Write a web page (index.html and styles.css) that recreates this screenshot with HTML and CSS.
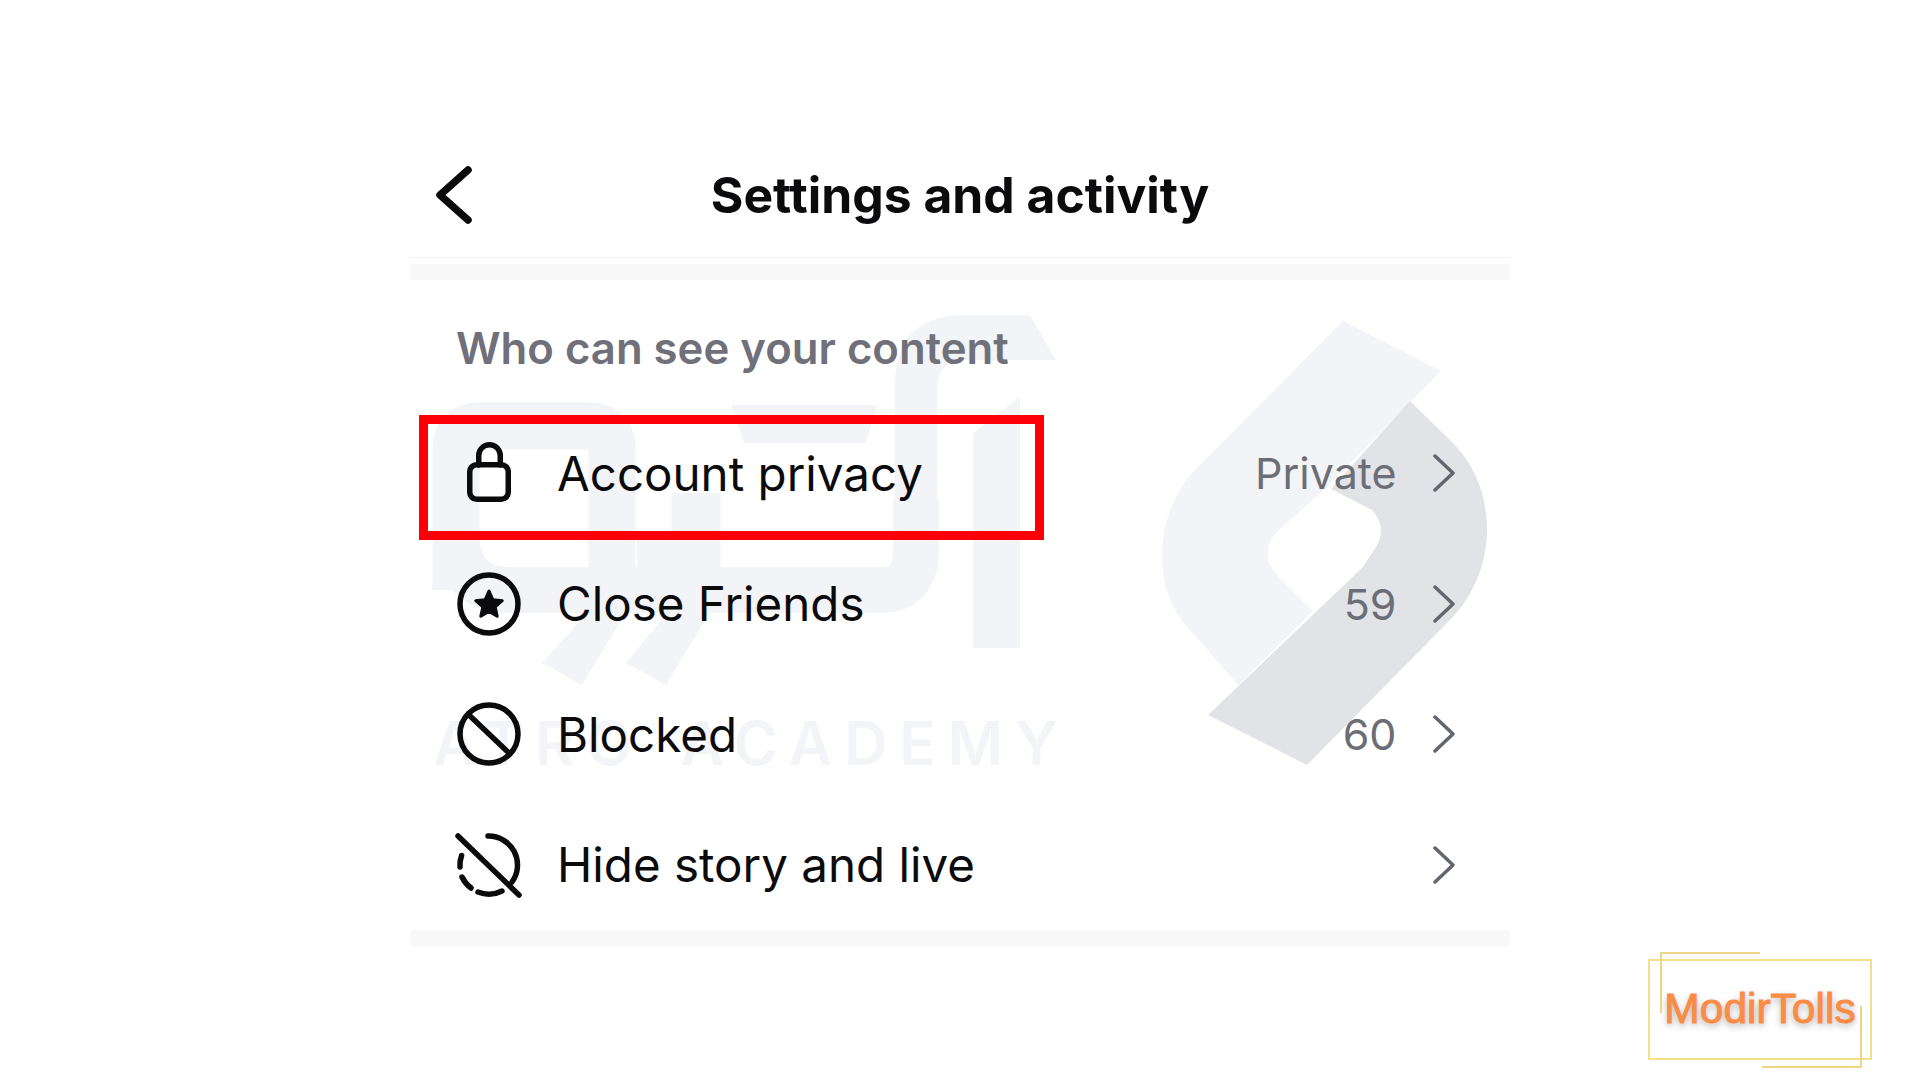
FILE: index.html
```html
<!DOCTYPE html>
<html lang="en">
<head>
    <meta charset="UTF-8">
    <meta name="viewport" content="width=device-width, initial-scale=1.0">
    <title>Settings and activity</title>
    <link rel="stylesheet" href="styles.css">
</head>
<body>
    <!-- faded academy watermark behind the list -->
    <svg class="watermark" viewBox="0 0 1920 1080" aria-hidden="true">
        <g fill="none" stroke="#f3f4f7">
            <path stroke-width="47" d="M456 590 V450 Q456 426 480 426 H590 Q612 426 612 450 V590"/>
            <path stroke-width="46" d="M456 530 Q456 590 510 590 H880 Q916 590 916 550 V500"/>
            <path stroke-width="49" d="M696 493 V590"/>
        </g>
        <g fill="#f3f4f7">
            <rect x="637" y="540" width="35" height="30"/>
            <polygon points="731,405 877,405 866,443 744,443"/>
            <path d="M895 560 V385 Q895 315 965 315 H1030 L1056 360 H965 Q937 360 937 390 V560 Z"/>
            <polygon points="973,433 1020,397 1020,648 973,648"/>
            <polygon points="588,612 542,663 582,685 626,612"/>
            <polygon points="668,612 626,663 666,685 710,612"/>
            <path d="M1343 321 L1441 371 L1327 487 L1277 532 Q1258 553 1277 575 L1313 611 L1238 685 L1190 630 Q1162 600 1162 557 Q1162 510 1190 475 Z"/>
        </g>
        <path fill="#e2e3e7" d="M1410 401 L1455 445 C1478 470 1487 500 1487 530 C1487 565 1472 598 1450 620 L1307 765 L1208 715 L1363 567 L1372 553 Q1390 530 1372 510 L1331 489 Z"/>
    </svg>
    <div class="watermark-name">ATRO ACADEMY</div>

    <div class="screen">
        <header class="top-bar">
            <svg class="back" viewBox="0 0 40 60" aria-hidden="true">
                <path d="M33 5 L5 30 L33 55"/>
            </svg>
            <h1>Settings and activity</h1>
        </header>
        <div class="band"></div>

        <h2 class="section-label">Who can see your content</h2>
        <ul class="list">
            <li class="row marked">
                <svg class="icon" viewBox="0 0 64 64" aria-hidden="true">
                    <rect x="12.75" y="23.75" width="38.5" height="34.5" rx="7"/>
                    <path d="M21.75 24 V14.5 a10.75 10.75 0 0 1 21.5 0 V24"/>
                </svg>
                <span class="row-name">Account privacy</span>
                <span class="row-value">Private</span>
                <svg class="more" viewBox="0 0 24 38" aria-hidden="true"><path d="M3 2 L21 19 L3 36"/></svg>
            </li>
            <li class="row">
                <svg class="icon" viewBox="0 0 64 64" aria-hidden="true">
                    <circle cx="32" cy="32" r="29"/>
                    <path class="solid" d="M32 19 L35.8 27.7 L45.3 28.7 L38.2 35 L40.2 44.3 L32 39.5 L23.8 44.3 L25.8 35 L18.7 28.7 L28.2 27.7 Z"/>
                </svg>
                <span class="row-name">Close Friends</span>
                <span class="row-value">59</span>
                <svg class="more" viewBox="0 0 24 38" aria-hidden="true"><path d="M3 2 L21 19 L3 36"/></svg>
            </li>
            <li class="row">
                <svg class="icon" viewBox="0 0 64 64" aria-hidden="true">
                    <circle cx="32" cy="32" r="29"/>
                    <path d="M12 13 L52 51"/>
                </svg>
                <span class="row-name">Blocked</span>
                <span class="row-value">60</span>
                <svg class="more" viewBox="0 0 24 38" aria-hidden="true"><path d="M3 2 L21 19 L3 36"/></svg>
            </li>
            <li class="row">
                <svg class="icon" viewBox="0 0 64 64" aria-hidden="true">
                    <path d="M31 3 A29 29 0 0 1 55 49"/>
                    <path d="M4.6 22.5 A29 29 0 0 0 3 34"/>
                    <path d="M5 44 A29 29 0 0 0 14 55"/>
                    <path d="M21 59 A29 29 0 0 0 45 58"/>
                    <path d="M1 3 L62 62"/>
                </svg>
                <span class="row-name">Hide story and live</span>
                <svg class="more" viewBox="0 0 24 38" aria-hidden="true"><path d="M3 2 L21 19 L3 36"/></svg>
            </li>
        </ul>
        <div class="band band-end"></div>
    </div>

    <div class="badge">ModirTolls</div>
</body>
</html>
```

FILE: styles.css
```css
*, *::before, *::after {
    box-sizing: border-box;
}
html, body {
    height: 100%;
}
body {
    margin: 0;
    background-color: #fff;
    color: #0b0b0d;
    font-family: Inter, "Liberation Sans", sans-serif;
    overflow: hidden;
}
.watermark {
    position: absolute;
    left: 0;
    top: 0;
    width: 1920px;
    height: 1080px;
}
.watermark-name {
    position: absolute;
    left: 433px;
    top: 707px;
    font-size: 60px;
    line-height: 73px;
    font-weight: 600;
    letter-spacing: 12px;
    word-spacing: 9px;
    white-space: nowrap;
    color: #f3f4f7;
}
.screen {
    position: relative;
    width: 1100px;
    margin: 0 auto;
    padding-top: 133px;
}
.top-bar {
    position: relative;
    display: flex;
    justify-content: center;
    align-items: center;
    height: 125px;
    padding-bottom: 1px;
    border-bottom: 1px solid #f3f3f3;
}
.top-bar h1 {
    margin: 0;
    font-size: 49.8px;
    font-weight: 700;
}
.back {
    position: absolute;
    left: 25px;
    top: 32px;
    width: 40px;
    height: 60px;
    fill: none;
    stroke: #0b0b0d;
    stroke-width: 7.5;
    stroke-linecap: round;
    stroke-linejoin: round;
}
.band {
    height: 16px;
    margin-top: 6px;
    background-color: #f8f8f9;
}
.band-end {
    margin-top: 0;
}
.section-label {
    margin: 39px 0 29px 46px;
    font-size: 43.7px;
    line-height: 60px;
    font-weight: 600;
    color: #6f7079;
}
.list {
    margin: 0;
    padding: 0;
    list-style: none;
}
.row {
    position: relative;
    display: flex;
    align-items: center;
    height: 130.5px;
    padding: 0 54.5px 0 47px;
    font-size: 47.5px;
}
.marked::after {
    content: "";
    position: absolute;
    left: 9px;
    top: 7px;
    width: 625px;
    height: 125px;
    border: 9px solid #fb0007;
}
.icon {
    flex: none;
    width: 64px;
    height: 64px;
    margin-right: 36px;
    overflow: visible;
    fill: none;
    stroke: #0b0b0d;
    stroke-width: 5.5;
    stroke-linecap: round;
}
.icon .solid {
    fill: #0b0b0d;
    stroke-width: 3;
    stroke-linejoin: round;
}
.row-value {
    margin-left: auto;
    font-size: 43px;
    color: #6b6e76;
}
.more {
    flex: none;
    width: 24px;
    height: 38px;
    margin-left: 35px;
    fill: none;
    stroke: #63666e;
    stroke-width: 3.5;
    stroke-linecap: round;
    stroke-linejoin: round;
}
.row-name + .more {
    margin-left: auto;
}
.badge {
    position: absolute;
    left: 1648px;
    top: 959px;
    width: 224px;
    height: 101px;
    padding-top: 23px;
    border: 2px solid #f6df8a;
    text-align: center;
    font-family: "Liberation Sans", Arial, sans-serif;
    font-size: 42.5px;
    line-height: 50px;
    color: #fb8c46;
    -webkit-text-stroke: 1px #fb8c46;
    text-shadow: 0 3px 7px rgba(0, 0, 0, 0.35);
}
.badge::before {
    content: "";
    position: absolute;
    left: 10px;
    top: -9px;
    width: 100px;
    height: 61px;
    border-top: 2px solid #ecd684;
    border-left: 2px solid #ecd684;
}
.badge::after {
    content: "";
    position: absolute;
    right: 8px;
    bottom: -10px;
    width: 100px;
    height: 62px;
    border-right: 2px solid #ecd684;
    border-bottom: 2px solid #ecd684;
}
```
